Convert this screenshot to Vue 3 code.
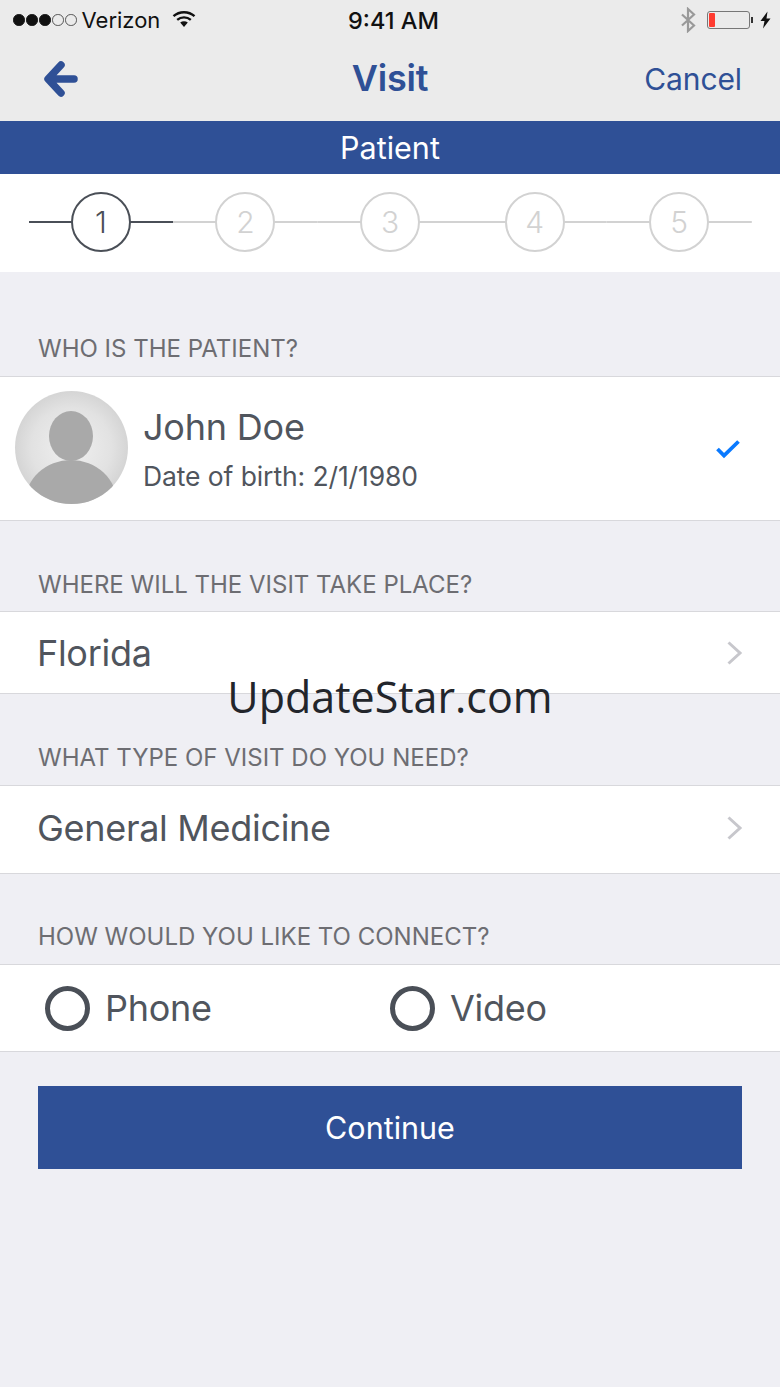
<script setup>
const steps = [1, 2, 3, 4, 5];
const options = ["Phone", "Video"];
</script>

<template>
  <main class="page">
    <header class="top">
      <div class="status">
        <div class="status-left">
          <span class="signal">
            <i class="dot on"></i><i class="dot on"></i><i class="dot on"></i><i class="dot"></i><i class="dot"></i>
          </span>
          <span class="carrier">Verizon</span>
          <svg class="wifi" width="24" height="18" viewBox="0 0 24 18">
            <path d="M1.500 6.200C7.400 .9 16.600 .9 22.500 6.200" fill="none" stroke="#111" stroke-width="2.400" />
            <path d="M5.200 9.800C9 6.500 15 6.500 18.800 9.800" fill="none" stroke="#111" stroke-width="2.400" />
            <path d="M8.200 12.600C10.400 10.900 13.600 10.900 15.800 12.600L12 17Z" fill="#111" />
          </svg>
        </div>
        <span class="time">9:41 AM</span>
        <div class="status-right">
          <svg width="16" height="26" viewBox="0 0 16 26">
            <path d="M2 7.500L14 18.500L8 24V2L14 7.500L2 18.500" fill="none" stroke="#999" stroke-width="2.200" />
          </svg>
          <span class="battery"><span class="charge"></span></span>
          <span class="battery-tip"></span>
          <svg class="bolt" width="11" height="18" viewBox="0 0 11 17">
            <path d="M7.500 0L0.500 9.500H4.500L3 17L10.500 7H6.500Z" fill="#111" />
          </svg>
        </div>
      </div>
      <nav class="nav">
        <svg class="back" width="38" height="38" viewBox="0 0 38 38">
          <path d="M18 5L5 19L18 33M6 19H31" fill="none" stroke="#2f5096" stroke-width="7.500" stroke-linecap="round" stroke-linejoin="round" />
        </svg>
        <h1>Visit</h1>
        <a class="cancel">Cancel</a>
      </nav>
    </header>

    <div class="banner">Patient</div>

    <div class="steps">
      <div v-for="s in steps" :key="s" class="step" :class="{ active: s === 1 }">
        <span class="circle">{{ s }}</span>
      </div>
    </div>

    <section class="who">
      <h2>WHO IS THE PATIENT?</h2>
      <div class="row patient">
        <div class="avatar">
          <svg width="113" height="113" viewBox="0 0 113 113">
            <ellipse cx="56" cy="45" rx="22" ry="25" fill="#a9a9a9" />
            <ellipse cx="56" cy="112" rx="46" ry="43" fill="#a9a9a9" />
          </svg>
        </div>
        <div class="patient-text">
          <div class="name">John Doe</div>
          <div class="dob">Date of birth: 2/1/1980</div>
        </div>
        <svg class="check" width="26" height="20" viewBox="0 0 26 20">
          <path d="M2.500 10L9 16.500L23.500 2.500" fill="none" stroke="#0a7aff" stroke-width="3.800" />
        </svg>
      </div>
    </section>

    <section class="where">
      <h2>WHERE WILL THE VISIT TAKE PLACE?</h2>
      <div class="row select state">
        <span>Florida</span>
        <svg width="18" height="26" viewBox="0 0 18 26">
          <path d="M2.500 2.500L14 13L2.500 23.500" fill="none" stroke="#c7c7cc" stroke-width="3" />
        </svg>
      </div>
    </section>

    <section class="type">
      <h2>WHAT TYPE OF VISIT DO YOU NEED?</h2>
      <div class="row select medicine">
        <span>General Medicine</span>
        <svg width="18" height="26" viewBox="0 0 18 26">
          <path d="M2.500 2.500L14 13L2.500 23.500" fill="none" stroke="#c7c7cc" stroke-width="3" />
        </svg>
      </div>
    </section>

    <section class="connect">
      <h2>HOW WOULD YOU LIKE TO CONNECT?</h2>
      <div class="row radios">
        <label v-for="o in options" :key="o" class="radio">
          <span class="ring"></span>{{ o }}
        </label>
      </div>
    </section>

    <button class="continue">Continue</button>

    <div class="watermark">UpdateStar.com</div>
  </main>
</template>

<style>
html, body {
  margin: 0;
  background: #efeff4;
}
</style>

<style scoped>
.page {
  position: relative;
  width: 780px;
  height: 1387px;
  overflow: hidden;
  background: #efeff4;
  font-family: Inter, "Liberation Sans", sans-serif;
  color: #50555d;
}
.top {
  height: 121px;
  background: #ebebeb;
}
.status {
  height: 40px;
  padding: 0 9px 0 13px;
  display: grid;
  grid-template-columns: 1fr auto 1fr;
  align-items: center;
  color: #111;
  font-size: 22px;
}
.status-left {
  display: flex;
  align-items: center;
}
.signal {
  display: flex;
  gap: 1.500px;
  margin-right: 5px;
}
.dot {
  width: 11.500px;
  height: 11.500px;
  box-sizing: border-box;
  border-radius: 50%;
  border: 1px solid #555;
}
.dot.on {
  background: #111;
  border-color: #111;
}
.wifi {
  margin-left: 12px;
  margin-top: -2px;
}
.time {
  font-size: 23.500px;
  font-weight: 500;
  margin-left: 3px;
}
.status-right {
  display: flex;
  align-items: center;
  justify-content: flex-end;
}
.battery {
  width: 43px;
  height: 18px;
  box-sizing: border-box;
  margin-left: 11px;
  border: 1px solid #777;
  border-radius: 3px;
  padding: 1px;
  display: flex;
}
.charge {
  width: 6px;
  background: #ff3b30;
  border-radius: 1px;
}
.battery-tip {
  width: 2px;
  height: 6px;
  background: #333;
  margin-left: 1px;
}
.bolt {
  margin-left: 7px;
}
.nav {
  height: 81px;
  box-sizing: border-box;
  padding: 0 38px 4px;
  display: grid;
  grid-template-columns: 1fr auto 1fr;
  align-items: center;
  color: #2f5096;
}
.back {
  margin-left: 5px;
}
.nav h1 {
  margin: 0 0 2px;
  font-size: 36px;
  font-weight: 600;
  line-height: 1;
  letter-spacing: -0.2px;
}
.cancel {
  justify-self: end;
  font-size: 30px;
  letter-spacing: -0.1px;
}
.banner {
  height: 53px;
  background: #2f5096;
  color: #fff;
  font-size: 30.500px;
  line-height: 54px;
  text-align: center;
}
.steps {
  height: 98px;
  padding: 0 28.500px;
  background: #fff;
  display: grid;
  grid-template-columns: repeat(5, 1fr);
  align-items: center;
  box-sizing: border-box;
}
.step {
  display: flex;
  justify-content: center;
  background: linear-gradient(#d2d2d2, #d2d2d2) center / 100% 2px no-repeat;
  margin-top: -3px;
}
.step.active {
  background-image: linear-gradient(#4a4f57, #4a4f57);
}
.circle {
  width: 60px;
  height: 60px;
  box-sizing: border-box;
  border: 2px solid #d2d2d2;
  border-radius: 50%;
  background: #fff;
  color: #d2d2d2;
  font-size: 30px;
  font-weight: 300;
  display: flex;
  align-items: center;
  justify-content: center;
}
.active .circle {
  border-color: #4a4f57;
  color: #4a4f57;
}
h2 {
  margin: 0;
  padding-left: 38px;
  font-size: 24px;
  font-weight: 400;
  line-height: 30px;
  color: #6d6d72;
}
.row {
  background: #fff;
  border-top: 1px solid #d8d8dc;
  border-bottom: 1px solid #d8d8dc;
  box-sizing: border-box;
}
.who {
  padding-top: 62px;
}
.who h2 {
  margin-bottom: 12px;
}
.patient {
  height: 145px;
  padding: 0 39px 0 15px;
  display: flex;
  align-items: center;
}
.avatar {
  width: 113px;
  height: 113px;
  margin-top: -2px;
  border-radius: 50%;
  overflow: hidden;
  background: radial-gradient(circle at 50% 50%, #f0f0f0 0%, #e2e2e2 50%, #c2c2c2 100%);
}
.avatar svg {
  display: block;
}
.patient-text {
  flex: 1;
  margin-left: 15px;
  padding-bottom: 1px;
}
.name {
  font-size: 36px;
  line-height: 44px;
  font-weight: 400;
  letter-spacing: -0.2px;
}
.dob {
  margin-top: 11px;
  font-size: 26.500px;
  line-height: 32px;
  font-weight: 400;
  letter-spacing: -0.1px;
}
.where {
  padding-top: 49px;
}
.where h2 {
  margin-bottom: 11px;
}
.select {
  display: flex;
  align-items: center;
  justify-content: space-between;
  padding: 0 36px 0 37px;
  font-size: 36px;
  font-weight: 400;
  letter-spacing: -0.3px;
}
.state {
  height: 83px;
}
.type {
  padding-top: 49px;
}
.type h2 {
  margin-bottom: 12px;
}
.medicine {
  height: 89px;
  padding-bottom: 3px;
}
.connect {
  padding-top: 48px;
}
.connect h2 {
  margin-bottom: 12px;
}
.radios {
  height: 88px;
  padding-left: 45px;
  display: grid;
  grid-template-columns: 345px 1fr;
  align-items: center;
}
.radio {
  display: flex;
  align-items: center;
  font-size: 36px;
  font-weight: 400;
  letter-spacing: -0.3px;
}
.ring {
  width: 45px;
  height: 45px;
  box-sizing: border-box;
  border: 5px solid #4a4f57;
  border-radius: 50%;
  margin-right: 15px;
}
.continue {
  display: block;
  width: 704px;
  height: 83px;
  margin: 34px 38px 0;
  border: none;
  background: #2f5096;
  color: #fff;
  font-family: inherit;
  font-size: 30.500px;
  padding: 0;
}
.watermark {
  position: absolute;
  left: 0;
  right: 0;
  top: 670px;
  text-align: center;
  font-size: 43px;
  line-height: 54px;
  color: #22252b;
  font-family: "Open Sans", sans-serif;
}
</style>
